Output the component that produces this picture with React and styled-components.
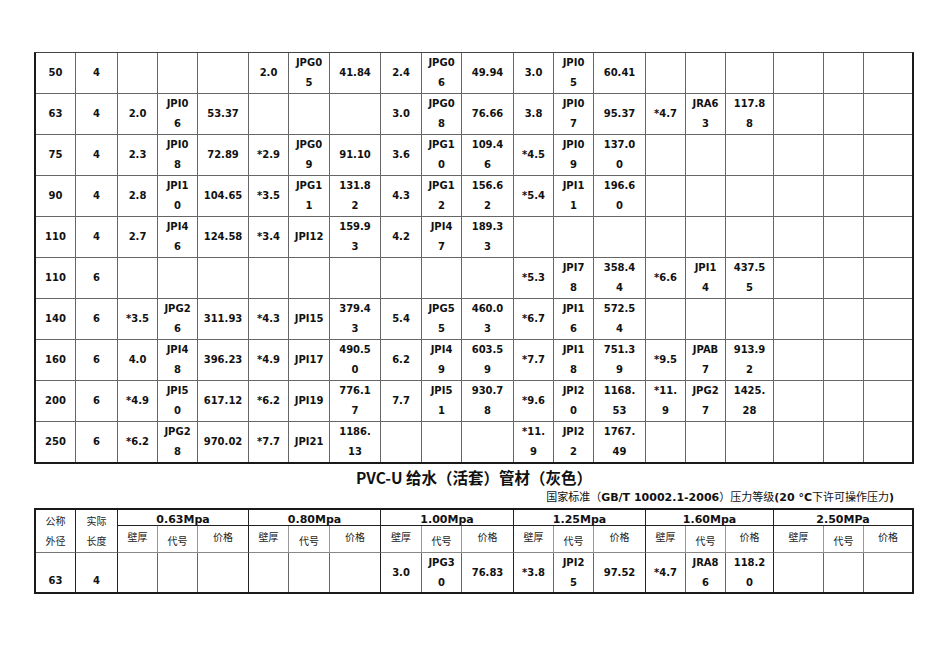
import React from "react";
import styled, { createGlobalStyle } from "styled-components";

const GlobalStyle = createGlobalStyle`
  html, body { margin: 0; padding: 0; background: #ffffff; }
  body { font-family: "DejaVu Sans", "Noto Sans CJK SC", sans-serif; color: #111; }
`;

const COLS = [40, 42, 40, 40, 51, 40, 41, 51, 41, 40, 52, 40, 40, 52, 40, 40, 48, 50, 40, 48];
const GRID_COLS = COLS.map((w) => `${w}px`).join(" ");

const ROWS = [
  ["50", "4", "", "", "", "2.0", "JPG0\n5", "41.84", "2.4", "JPG0\n6", "49.94", "3.0", "JPI0\n5", "60.41", "", "", "", "", "", ""],
  ["63", "4", "2.0", "JPI0\n6", "53.37", "", "", "", "3.0", "JPG0\n8", "76.66", "3.8", "JPI0\n7", "95.37", "*4.7", "JRA6\n3", "117.8\n8", "", "", ""],
  ["75", "4", "2.3", "JPI0\n8", "72.89", "*2.9", "JPG0\n9", "91.10", "3.6", "JPG1\n0", "109.4\n6", "*4.5", "JPI0\n9", "137.0\n0", "", "", "", "", "", ""],
  ["90", "4", "2.8", "JPI1\n0", "104.65", "*3.5", "JPG1\n1", "131.8\n2", "4.3", "JPG1\n2", "156.6\n2", "*5.4", "JPI1\n1", "196.6\n0", "", "", "", "", "", ""],
  ["110", "4", "2.7", "JPI4\n6", "124.58", "*3.4", "JPI12", "159.9\n3", "4.2", "JPI4\n7", "189.3\n3", "", "", "", "", "", "", "", "", ""],
  ["110", "6", "", "", "", "", "", "", "", "", "", "*5.3", "JPI7\n8", "358.4\n4", "*6.6", "JPI1\n4", "437.5\n5", "", "", ""],
  ["140", "6", "*3.5", "JPG2\n6", "311.93", "*4.3", "JPI15", "379.4\n3", "5.4", "JPG5\n5", "460.0\n3", "*6.7", "JPI1\n6", "572.5\n4", "", "", "", "", "", ""],
  ["160", "6", "4.0", "JPI4\n8", "396.23", "*4.9", "JPI17", "490.5\n0", "6.2", "JPI4\n9", "603.5\n9", "*7.7", "JPI1\n8", "751.3\n9", "*9.5", "JPAB\n7", "913.9\n2", "", "", ""],
  ["200", "6", "*4.9", "JPI5\n0", "617.12", "*6.2", "JPI19", "776.1\n7", "7.7", "JPI5\n1", "930.7\n8", "*9.6", "JPI2\n0", "1168.\n53", "*11.\n9", "JPG2\n7", "1425.\n28", "", "", ""],
  ["250", "6", "*6.2", "JPG2\n8", "970.02", "*7.7", "JPI21", "1186.\n13", "", "", "", "*11.\n9", "JPI2\n2", "1767.\n49", "", "", "", "", "", ""],
];

const GROUPS = ["0.63Mpa", "0.80Mpa", "1.00Mpa", "1.25Mpa", "1.60Mpa", "2.50MPa"];
const SUB = [
  { t: "壁厚", up: true },
  { t: "代号", up: false },
  { t: "价格", up: true },
];
const BOTTOM_ROW = ["", "", "", "", "", "", "3.0", "JPG3\n0", "76.83", "*3.8", "JPI2\n5", "97.52", "*4.7", "JRA8\n6", "118.2\n0", "", "", ""];

const Page = styled.div`
  padding: 52px 0 40px 34px;
  width: 880px;
`;

const PriceGrid = styled.div`
  display: grid;
  grid-template-columns: ${GRID_COLS};
  grid-template-rows: repeat(9, 41px) 40px;
  width: max-content;
  border-top: 1px solid #444;
  border-left: 2px solid #1a1a1a;
  border-right: 2px solid #1a1a1a;
  border-bottom: 2px solid #1a1a1a;
`;

const DataCell = styled.div`
  box-sizing: border-box;
  display: flex;
  align-items: ${(p) => (p.$bottom ? "flex-end" : "center")};
  justify-content: center;
  text-align: center;
  white-space: pre-line;
  font-family: "DejaVu Sans", sans-serif;
  font-weight: bold;
  font-size: 10px;
  line-height: 20px;
  color: #111;
  padding-bottom: ${(p) => (p.$bottom ? "1px" : "0")};
  border-right: ${(p) => (p.$lastCol ? "none" : `1px solid ${p.$dark ? "#222" : "#666"}`)};
  border-bottom: ${(p) => (p.$lastRow ? "none" : "1px solid #666")};
`;

const Title = styled.div`
  width: 880px;
  text-align: center;
  padding-top: 2px;
  font-family: "Noto Sans CJK SC", sans-serif;
  font-weight: bold;
  font-size: 15.5px;
  line-height: 22px;
  color: #111;
`;

const Subtitle = styled.div`
  width: 880px;
  box-sizing: border-box;
  text-align: right;
  padding-right: 20px;
  font-family: "Noto Sans CJK SC", sans-serif;
  font-size: 11px;
  line-height: 16px;
  color: #111;
  margin-bottom: 2px;
`;

const Latin = styled.span`
  font-family: "DejaVu Sans", sans-serif;
  font-weight: bold;
`;

const HeadGrid = styled.div`
  display: grid;
  grid-template-columns: ${GRID_COLS};
  grid-template-rows: 16px 27px 39px;
  width: max-content;
  border: 2px solid #1a1a1a;
`;

const StubHead = styled.div`
  box-sizing: border-box;
  grid-row: span 2;
  display: flex;
  align-items: center;
  justify-content: center;
  text-align: center;
  white-space: pre-line;
  font-family: "Noto Sans CJK SC", sans-serif;
  font-size: 10px;
  line-height: 20px;
  color: #222;
  border-right: 1px solid #222;
  border-bottom: 1px solid #777;
`;

const GroupHead = styled.div`
  box-sizing: border-box;
  grid-column: span 3;
  display: flex;
  align-items: flex-start;
  justify-content: center;
  padding-top: 3px;
  font-family: "DejaVu Sans", sans-serif;
  font-weight: bold;
  font-size: 11px;
  line-height: 13px;
  color: #111;
  border-right: ${(p) => (p.$lastCol ? "none" : "1px solid #222")};
  border-bottom: 1px solid #222;
  overflow: visible;
`;

const SubHead = styled.div`
  box-sizing: border-box;
  display: flex;
  align-items: center;
  justify-content: center;
  padding-bottom: ${(p) => (p.$up ? "4px" : "0")};
  padding-top: ${(p) => (p.$up ? "0" : "3px")};
  font-family: "Noto Sans CJK SC", sans-serif;
  font-size: 10px;
  line-height: 14px;
  color: #222;
  border-right: ${(p) => (p.$lastCol ? "none" : `1px solid ${p.$dark ? "#222" : "#999"}`)};
  border-bottom: 1px solid #888;
`;

export default function App() {
  const lastRow = ROWS.length - 1;
  return (
    <>
      <GlobalStyle />
      <Page>
        <PriceGrid>
          {ROWS.map((row, r) =>
            row.map((v, c) => (
              <DataCell key={`${r}-${c}`} $lastCol={c === COLS.length - 1} $lastRow={r === lastRow}>
                {v}
              </DataCell>
            ))
          )}
        </PriceGrid>

        <Title>PVC-U 给水（活套）管材（灰色）</Title>
        <Subtitle>
          国家标准（<Latin>GB/T 10002.1-2006</Latin>）压力等级<Latin>(20 °C</Latin>下许可操作压力<Latin>)</Latin>
        </Subtitle>

        <HeadGrid>
          <StubHead>{"公称\n外径"}</StubHead>
          <StubHead>{"实际\n长度"}</StubHead>
          {GROUPS.map((g, i) => (
            <GroupHead key={g} $lastCol={i === GROUPS.length - 1}>
              {g}
            </GroupHead>
          ))}
          {GROUPS.map((g, i) =>
            SUB.map((s, j) => (
              <SubHead
                key={`${g}-${s.t}`}
                $up={s.up}
                $dark={j === 2}
                $lastCol={i === GROUPS.length - 1 && j === 2}
              >
                {s.t}
              </SubHead>
            ))
          )}
          <DataCell $lastRow $bottom $dark>63</DataCell>
          <DataCell $lastRow $bottom $dark>4</DataCell>
          {BOTTOM_ROW.map((v, c) => (
            <DataCell
              key={`b-${c}`}
              $lastRow
              $dark={c % 3 === 2}
              $lastCol={c === BOTTOM_ROW.length - 1}
            >
              {v}
            </DataCell>
          ))}
        </HeadGrid>
      </Page>
    </>
  );
}
